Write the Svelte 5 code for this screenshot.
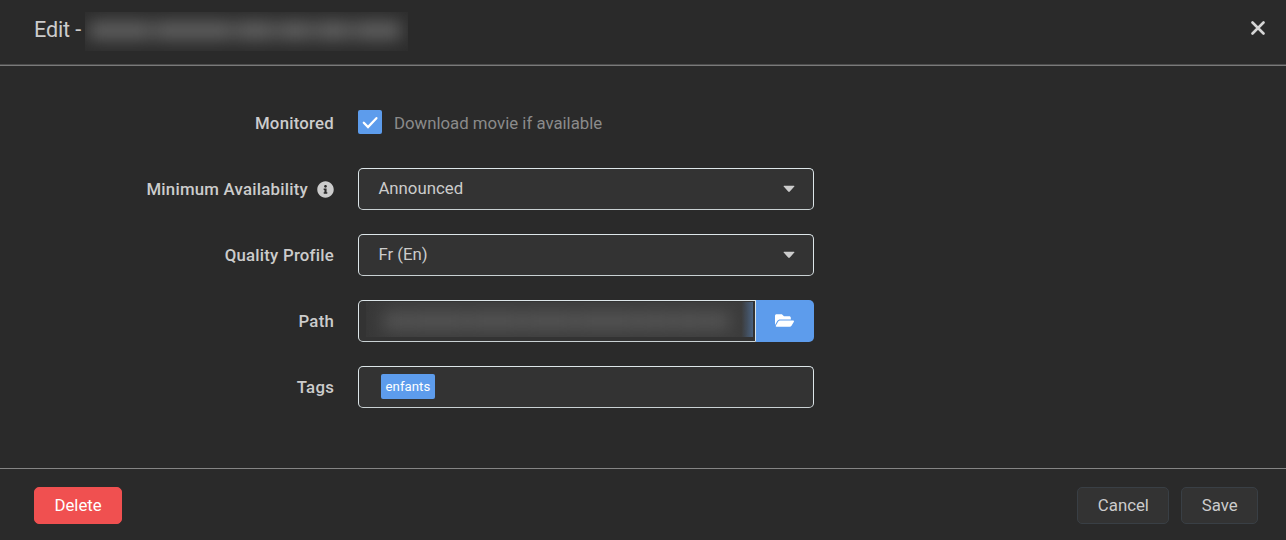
<script>
  let monitored = $state(true);
  const titleWords = [62, 78, 40, 34, 36, 47];
  const pathWords = [24, 58, 54, 52, 62, 34, 30, 24];
  const tags = ['enfants'];
</script>

{#snippet caret()}
  <svg class="caret" viewBox="0 0 12 8" aria-hidden="true"><path d="M1.2 .7H10.8Q12 .7 11.3 1.6L6.8 6.5Q6 7.4 5.2 6.5L.7 1.6Q0 .7 1.2 .7Z" fill="currentColor" /></svg>
{/snippet}

<div class="modal">
  <header>
    <h1>Edit -</h1>
    <div class="redacted title-mask"><div class="words">{#each titleWords as w}<i style="width:{w}px"></i>{/each}</div></div>
    <button class="close" aria-label="Close">
      <svg viewBox="0 0 14 14"><path d="M1.5 1.5L12.5 12.5M12.5 1.5L1.5 12.5" stroke="currentColor" stroke-width="2.6" stroke-linecap="round" /></svg>
    </button>
  </header>

  <main>
    <div class="row">
      <div class="label">Monitored</div>
      <div class="check-line">
        <button class="check" role="checkbox" aria-checked={monitored} aria-label="Monitored" onclick={() => (monitored = !monitored)}>
          {#if monitored}<svg viewBox="0 0 24 24"><path d="M5.8 12.8L10 17L18.4 8.2" fill="none" stroke="#fff" stroke-width="2.3" stroke-linecap="round" /></svg>{/if}
        </button>
        <span>Download movie if available</span>
      </div>
    </div>
    <div class="row">
      <div class="label">Minimum Availability
        <svg class="info" viewBox="0 0 512 512" aria-hidden="true"><path fill="currentColor" d="M256 8C119 8 8 119 8 256s111 248 248 248 248-111 248-248S393 8 256 8zm0 110c23.200 0 42 18.800 42 42s-18.800 42-42 42-42-18.800-42-42 18.800-42 42-42zm56 254c0 6.600-5.400 12-12 12h-88c-6.600 0-12-5.400-12-12v-24c0-6.600 5.400-12 12-12h12v-64h-12c-6.600 0-12-5.400-12-12v-24c0-6.600 5.400-12 12-12h64c6.600 0 12 5.400 12 12v100h12c6.600 0 12 5.400 12 12v24z" /></svg>
      </div>
      <div class="field"><span>Announced</span>{@render caret()}</div>
    </div>
    <div class="row">
      <div class="label">Quality Profile</div>
      <div class="field"><span>Fr (En)</span>{@render caret()}</div>
    </div>
    <div class="row">
      <div class="label">Path</div>
      <div class="group">
        <div class="field path">
          <div class="redacted path-mask"><div class="words">{#each pathWords as w}<i style="width:{w}px"></i>{/each}</div></div>
        </div>
        <button class="browse" aria-label="Browse">
          <svg viewBox="0 0 576 512"><path fill="#fff" d="M572.694 292.093L500.270 416.248A63.997 63.997 0 0 1 444.989 448H45.025c-18.523 0-30.064-20.093-20.731-36.093l72.424-124.155A64 64 0 0 1 152 256h399.964c18.523 0 30.064 20.093 20.730 36.093zM152 224h328v-48c0-26.510-21.490-48-48-48H272l-64-64H48C21.490 64 0 85.490 0 112v278.046l69.077-118.418C86.214 242.250 117.989 224 152 224z" /></svg>
        </button>
      </div>
    </div>
    <div class="row">
      <div class="label">Tags</div>
      <div class="field tags">{#each tags as tag}<span class="tag">{tag}</span>{/each}</div>
    </div>
  </main>

  <footer>
    <button class="btn danger">Delete</button>
    <div class="actions"><button class="btn">Cancel</button><button class="btn">Save</button></div>
  </footer>
</div>

<style>
  :global(body) { margin: 0; background: #2a2a2a; }
  * { box-sizing: border-box; }
  .modal { width: 1286px; height: 540px; display: flex; flex-direction: column; background: #2a2a2a; color: #ccc; font-family: Roboto, sans-serif; font-size: 16.8px; line-height: 24px; overflow: hidden; }
  button { font: inherit; color: inherit; border: 0; padding: 0; background: none; cursor: pointer; }
  svg { display: block; flex: none; }
  header { height: 66px; flex: none; display: flex; align-items: flex-start; padding-left: 34px; border-bottom: 1px solid #7a7a7a; box-shadow: inset 0 -1px #4d4d4d; }
  h1 { margin: 15px 0 0; width: 51px; font-size: 21.6px; line-height: 30px; font-weight: 400; letter-spacing: -.15px; white-space: nowrap; }
  .close { margin: 21px 21px 0 auto; width: 14px; height: 14px; color: #d5d5d5; }
  .redacted { overflow: hidden; display: flex; align-items: center; }
  .words { display: flex; filter: blur(8px); }
  .words i { display: block; background: #5e5e5e; }
  .title-mask { width: 323px; height: 39px; margin-top: 12px; padding-left: 4px; background: #2d2d2d; }
  .title-mask .words { gap: 3px; margin-top: -2px; }
  .title-mask i { height: 19px; }
  main { height: 402px; flex: none; padding: 36px 0 0 34px; display: flex; flex-direction: column; gap: 24px; }
  .row { display: flex; height: 42px; gap: 24px; }
  .label { width: 300px; display: flex; justify-content: flex-end; align-items: center; gap: 9px; font-weight: 500; letter-spacing: .23px; white-space: nowrap; }
  .info { width: 17px; height: 17px; }
  .check-line { display: flex; align-items: center; gap: 12px; color: #8b8b8b; }
  .check { width: 24px; height: 24px; border-radius: 2px; background: #5d9cec; margin-top: -2px; }
  .field { width: 456px; height: 42px; border: 1px solid #dde6e9; border-bottom-color: #c9d1d3; border-radius: 5px; background: #333; display: flex; align-items: center; justify-content: space-between; padding: 0 18px 0 19.4px; }
  .field > span { margin-top: -2px; }
  .caret { width: 12px; height: 8px; }
  .group { display: flex; }
  .path { width: 398px; border-radius: 5px 0 0 5px; padding: 0 1px 4px 7px; }
  .path-mask { width: 387px; height: 35px; padding-left: 18px; background: linear-gradient(90deg, #383838, #3c3c3c 10%, #3c3c3c 97%, #49617f); }
  .path-mask .words { gap: 1px; margin-top: 4px; }
  .path-mask i { height: 18px; background: #545454; }
  .browse { width: 58px; height: 42px; padding: 0 2px 2px 0; display: flex; align-items: center; justify-content: center; background: #5d9cec; border-radius: 0 5px 5px 0; }
  .browse svg { width: 19px; height: 17px; }
  .field.tags { justify-content: flex-start; padding-left: 22px; }
  .field .tag { margin-top: -1px; height: 25px; padding: 0 4.5px; border-radius: 2px; background: #5d9cec; color: #fff; font-size: 13.2px; line-height: 25px; letter-spacing: .05px; }
  footer { height: 72px; flex: none; border-top: 1px solid #858585; display: flex; justify-content: space-between; align-items: center; padding: 2px 28px 0 34px; }
  .actions { display: flex; gap: 12px; }
  .btn { height: 37px; padding: 0 19.4px 1px; border: 1px solid #393f45; border-radius: 5px; background: #333; }
  .btn.danger { background: #f05050; border-color: #f05050; color: #fff; }
</style>
